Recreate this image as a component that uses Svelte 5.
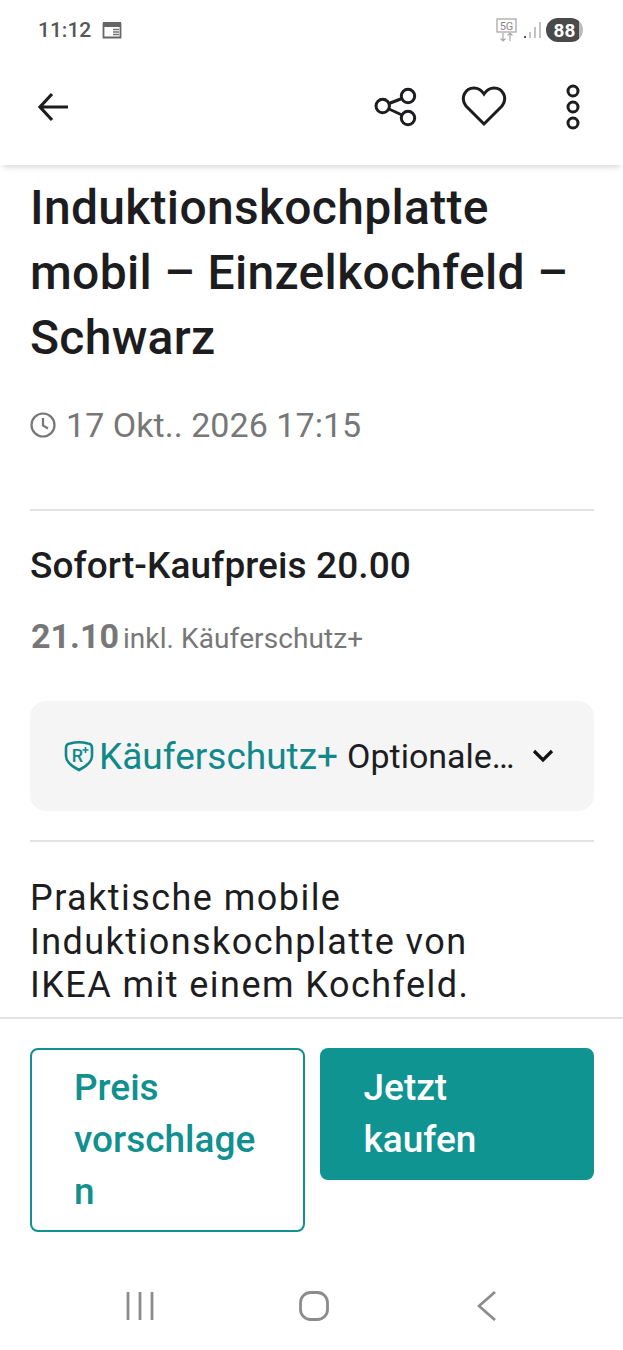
<script>
	const title = 'Induktionskochplatte mobil – Einzelkochfeld – Schwarz';
</script>

<div class="screen">
	<div class="status">
		<div class="status-left">
			<span class="time">11:12</span>
			<svg width="20" height="18" viewBox="0 0 20 18" fill="none">
				<path d="M1.500 3h17v13.500h-17z" fill="#fff" stroke="#666" stroke-width="1.800" />
				<path d="M1 1h18v5H1z" fill="#666" />
				<path d="M11 8.500h6M11 11h6M11 13.500h6" stroke="#777" stroke-width="1.300" />
			</svg>
		</div>
		<div class="status-right">
			<svg width="22" height="24" viewBox="0 0 22 24" fill="none" stroke="#aaa">
				<rect x="1" y="1" width="19" height="13" stroke-width="1.300" />
				<text x="10.500" y="12" font-size="11" font-family="Roboto" fill="#888" stroke="none" text-anchor="middle">5G</text>
				<path d="M7 15v8M4.500 20.500 7 23l2.500-2.500M14 23v-8M11.500 17.500 14 15l2.500 2.500" stroke-width="1.200" />
			</svg>
			<svg width="18" height="18" viewBox="0 0 18 18" fill="none" stroke-width="2">
				<path d="M2 15v2" stroke="#555" />
				<path d="M7 11v6M12 6v11M17 1v16" stroke="#c4c4c4" />
			</svg>
			<span class="battery">88</span>
		</div>
	</div>

	<header class="appbar">
		<svg width="32" height="30" viewBox="0 0 32 30" fill="none" stroke="#1d1d1f" stroke-width="3.200">
			<path d="M31 15H4M15 2 3 15l12 13" />
		</svg>
		<div class="actions">
			<svg width="44" height="40" viewBox="0 0 44 40" fill="none" stroke="#1d1d1f" stroke-width="3">
				<circle cx="8.700" cy="19" r="6.700" />
				<circle cx="34" cy="9" r="6.700" />
				<circle cx="34" cy="31" r="6.700" />
				<path d="M15 16.500 28 11.500M15 22l13 6" />
			</svg>
			<svg width="46" height="42" viewBox="0 0 46 42" fill="none" stroke="#1d1d1f" stroke-width="3">
				<path d="M23 38 5 20C-1 12 4 2 13 2c5 0 8 3 10 6 2-3 5-6 10-6 9 0 14 10 8 18z" />
			</svg>
			<svg class="dots" width="16" height="46" viewBox="0 0 16 46" fill="none" stroke="#1d1d1f" stroke-width="3">
				<circle cx="8" cy="7" r="5" />
				<circle cx="8" cy="23" r="5" />
				<circle cx="8" cy="39" r="5" />
			</svg>
		</div>
	</header>

	<main class="content">
		<h1>{title}</h1>
		<div class="date">
			<svg width="26" height="26" viewBox="0 0 26 26" fill="none" stroke="#777" stroke-width="2.200">
				<circle cx="13" cy="13" r="11.500" />
				<path d="M13 6v7.500l5 3" />
			</svg>
			<span>17 Okt.. 2026 17:15</span>
		</div>
		<hr />
		<div class="instant">Sofort-Kaufpreis 20.00</div>
		<div class="total"><b>21.10</b><span>inkl. Käuferschutz+</span></div>
		<div class="protect">
			<svg width="30" height="32" viewBox="0 0 30 32" fill="none" stroke="#11888a" stroke-width="2.600">
				<path d="M2 8Q2 4 6 3.500 15 1 24 3.500 28 4 28 8V16C28 23 21 27 15 30 9 27 2 23 2 16Z" />
				<text x="13.500" y="22" font-size="18" font-weight="500" font-family="Roboto" fill="#11888a" stroke="none" text-anchor="middle">R</text>
				<path d="M21.500 7v6M18.500 10h6" stroke-width="1.600" />
			</svg>
			<span class="brand">Käuferschutz+</span>
			<span class="optional">Optionale…</span>
			<svg width="22" height="14" viewBox="0 0 22 14" fill="none" stroke="#111" stroke-width="3.200">
				<path d="M2 2l9 9 9-9" />
			</svg>
		</div>
		<hr class="second" />
		<p>Praktische mobile Induktionskochplatte von IKEA mit einem Kochfeld.</p>
	</main>

	<footer class="buybar">
		<button class="outline">Preis vorschlagen</button>
		<button class="solid">Jetzt kaufen</button>
	</footer>

	<nav class="sysnav">
		<svg width="28" height="30" viewBox="0 0 28 30" fill="none" stroke="#8c8c8c" stroke-width="2.800">
			<path d="M2 1v28M14 1v28M26 1v28" />
		</svg>
		<svg class="home" width="30" height="30" viewBox="0 0 30 30" fill="none" stroke="#8c8c8c" stroke-width="2.800">
			<rect x="1.500" y="1.500" width="27" height="27" rx="10" />
		</svg>
		<svg width="20" height="30" viewBox="0 0 20 30" fill="none" stroke="#8c8c8c" stroke-width="2.800">
			<path d="M18 1 2 15l16 14" />
		</svg>
	</nav>
</div>

<style>
	:global(body) {
		margin: 0;
		background: #fff;
	}
	.screen {
		width: 623px;
		height: 1350px;
		display: flex;
		flex-direction: column;
		overflow: hidden;
		font-family: Roboto, "Liberation Sans", sans-serif;
		color: #1d1d1f;
		background: #fff;
	}
	.status {
		height: 60px;
		flex: none;
		display: flex;
		justify-content: space-between;
		align-items: center;
		padding: 0 40px 0 38px;
	}
	.status-left,
	.status-right {
		display: flex;
		align-items: center;
	}
	.status-left {
		gap: 11px;
	}
	.status-right {
		gap: 5px;
	}
	.time {
		font-size: 21px;
		font-weight: 500;
		color: #555;
	}
	.battery {
		width: 37px;
		height: 24px;
		border-radius: 12px;
		background: linear-gradient(90deg, #4a4a4a 88%, #bbb 88%);
		color: #fff;
		font-size: 19px;
		font-weight: 700;
		display: flex;
		align-items: center;
		justify-content: center;
	}
	.appbar {
		height: 105px;
		flex: none;
		display: flex;
		justify-content: space-between;
		align-items: center;
		padding: 0 42px 12px 37px;
		box-shadow: 0 5px 6px -3px rgba(0, 0, 0, 0.16);
		position: relative;
		z-index: 1;
		background: #fff;
		box-sizing: border-box;
	}
	.actions {
		display: flex;
		align-items: center;
		gap: 43px;
	}
	.dots {
		margin-left: 15px;
	}
	.content {
		flex: 1;
		min-height: 0;
		overflow: hidden;
		padding: 10px 29px 0 30px;
	}
	h1 {
		margin: 0;
		font-size: 48px;
		line-height: 65px;
		font-weight: 500;
		letter-spacing: 0.3px;
	}
	.date {
		margin-top: 33px;
		display: flex;
		align-items: center;
		gap: 10px;
		font-size: 34px;
		line-height: 44px;
		letter-spacing: 0.05px;
		color: #777;
	}
	hr {
		border: 0;
		height: 2px;
		background: #e2e2e2;
		margin: 62px 0 0;
	}
	.instant {
		margin-top: 33px;
		font-size: 37px;
		line-height: 44px;
		font-weight: 500;
		letter-spacing: 0.1px;
	}
	.total {
		margin-top: 28px;
		margin-left: 1px;
		display: flex;
		align-items: baseline;
		gap: 4px;
		color: #777;
	}
	.total b {
		font-size: 34px;
		font-weight: 700;
	}
	.total span {
		font-size: 28px;
		letter-spacing: 0.1px;
	}
	.protect {
		margin-top: 45px;
		height: 110px;
		border-radius: 16px;
		background: #f5f5f5;
		display: flex;
		align-items: center;
		padding: 0 40px 0 34px;
		gap: 5px;
		box-sizing: border-box;
	}
	.brand {
		color: #11888a;
		font-size: 37px;
	}
	.optional {
		font-size: 34px;
		margin-left: 4px;
		flex: 1;
	}
	hr.second {
		margin-top: 29px;
	}
	p {
		margin: 35px 0 0;
		font-size: 36px;
		line-height: 43.500px;
		letter-spacing: 1.450px;
		max-width: 530px;
	}
	.buybar {
		flex: none;
		height: 233px;
		box-sizing: border-box;
		border-top: 2px solid #e4e4e4;
		padding: 29px 29px 0 30px;
		display: flex;
		align-items: flex-start;
		gap: 15px;
	}
	button {
		flex: 1;
		min-width: 0;
		box-sizing: border-box;
		font: 500 37px/52px Roboto, sans-serif;
		text-align: left;
		padding: 12px 43px 12px 42px;
		border-radius: 8px;
		overflow-wrap: anywhere;
	}
	.outline {
		background: #fff;
		color: #11908f;
		border: 2px solid #11908f;
	}
	.solid {
		background: #109492;
		color: #fff;
		border: 2px solid #109492;
	}
	.sysnav {
		flex: none;
		height: 100px;
		display: flex;
		justify-content: space-between;
		align-items: center;
		padding: 11px 126px 0 126px;
		box-sizing: border-box;
	}
	.home {
		margin-right: 3px;
	}
</style>
